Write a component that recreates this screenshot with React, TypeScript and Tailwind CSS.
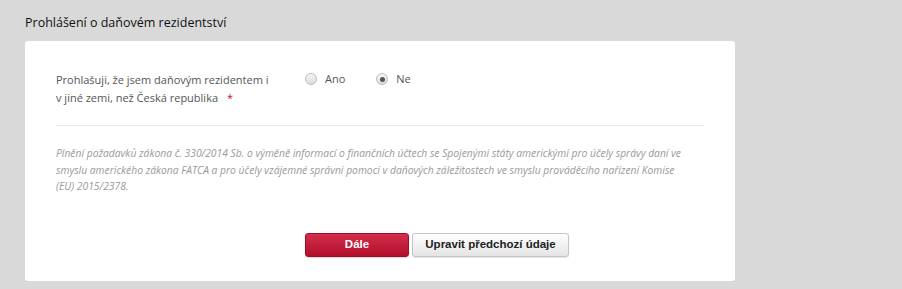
import React, { useState } from 'react';

const sans = { fontFamily: '"Open Sans", "Noto Sans", sans-serif' };

function Radio({ checked, label, onClick }: { checked: boolean; label: string; onClick: () => void }) {
  return (
    <label className="flex items-center gap-[8px] cursor-pointer" onClick={onClick}>
      <span className="w-[12px] h-[12px] rounded-full border border-[#bdbdbd] bg-gradient-to-b from-[#f6f6f6] to-[#dcdcdc] flex items-center justify-center">
        {checked && <span className="w-[5px] h-[5px] rounded-full bg-[#555]" />}
      </span>
      <span className="text-[11px] text-[#555]">{label}</span>
    </label>
  );
}

export default function App() {
  const [resident, setResident] = useState<'ano' | 'ne'>('ne');

  return (
    <div className="w-[902px] h-[289px] bg-[#d9d9d9] overflow-hidden" style={sans}>
      <h2 className="pl-[25px] pt-[14px] text-[12.5px] leading-[18px] text-[#111]">
        Prohlášení o daňovém rezidentství
      </h2>

      <div className="mt-[9px] ml-[25px] w-[710px] h-[240px] bg-white rounded-[3px] pl-[31px] pr-[31px] pt-[30px]">
        {/* Question row */}
        <div className="flex">
          <div className="w-[249px] text-[11px] leading-[18px] text-[#555]">
            Prohlašuji, že jsem daňovým rezidentem i<br />
            v jiné zemi, než Česká republika
            <span className="text-[#c8102e] ml-[9px]">*</span>
          </div>
          <div className="flex gap-[31px] h-[16px] items-center">
            <Radio checked={resident === 'ano'} label="Ano" onClick={() => setResident('ano')} />
            <Radio checked={resident === 'ne'} label="Ne" onClick={() => setResident('ne')} />
          </div>
        </div>

        <div className="mt-[18px] border-t border-[#e6e6e6]" />

        <p className="mt-[19px] text-[10.3px] leading-[16.5px] italic text-[#999] pr-[10px]">
          Plnění požadavků zákona č. 330/2014 Sb. o výměně informací o finančních účtech se Spojenými státy americkými pro účely správy daní ve
          smyslu amerického zákona FATCA a pro účely vzájemné správní pomoci v daňových záležitostech ve smyslu prováděcího nařízení Komise
          (EU) 2015/2378.
        </p>

        <div className="mt-[38px] ml-[249px] flex gap-[3px]" style={{ fontFamily: '"Liberation Sans", Arial, sans-serif' }}>
          <button className="w-[104px] h-[24px] rounded-[3px] bg-gradient-to-b from-[#d42c4b] to-[#b10f2c] border border-[#a30c27] text-white text-[11.5px] font-bold shadow-[0_1px_1px_rgba(0,0,0,0.15)]">
            Dále
          </button>
          <button className="w-[157px] h-[24px] rounded-[3px] bg-gradient-to-b from-[#ffffff] to-[#e4e4e4] border border-[#c4c4c4] text-[#222] text-[11.5px] font-bold shadow-[0_1px_1px_rgba(0,0,0,0.1)]">
            Upravit předchozí údaje
          </button>
        </div>
      </div>
    </div>
  );
}
